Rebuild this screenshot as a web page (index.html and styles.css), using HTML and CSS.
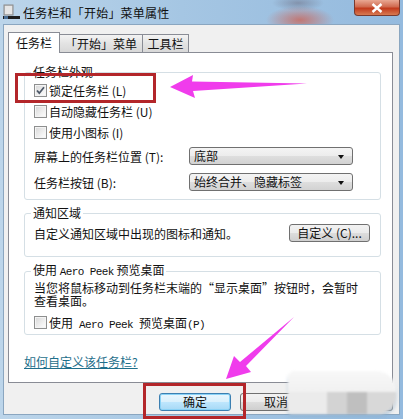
FILE: index.html
```html
<!DOCTYPE html>
<html lang="zh-CN">
<head>
    <meta charset="UTF-8">
    <meta name="viewport" content="width=device-width, initial-scale=1.0">
    <title>任务栏和「开始」菜单属性</title>
    <link rel="stylesheet" href="styles.css">
</head>
<body>
    <div class="window">
        <div class="titlebar">
            <svg class="app-icon" width="17" height="16" viewBox="0 0 17 16">
                <rect x="1" y="1" width="9" height="10" fill="#c9c9c9" stroke="#8a8a8a"/>
                <rect x="2" y="2" width="7" height="8" fill="#e6e6e6"/>
                <rect x="0" y="12" width="17" height="3" fill="#1e1e1e"/>
                <rect x="1" y="12" width="4" height="3" fill="#4a6f96"/>
            </svg>
            <span class="title">任务栏和「开始」菜单属性</span>
            <div class="close">
                <svg width="12" height="10" viewBox="0 0 12 10">
                    <path d="M1.5 1 L10.5 9 M10.5 1 L1.5 9" stroke="#fff" stroke-width="2.4"/>
                </svg>
            </div>
        </div>
        <div class="content">
            <div class="tabs">
                <div class="tab active">任务栏</div>
                <div class="tab">「开始」菜单</div>
                <div class="tab">工具栏</div>
            </div>
            <div class="panel">
                <fieldset class="group first">
                    <legend>任务栏外观</legend>
                    <div class="check-row">
                        <span class="checkbox checked">
                            <svg width="11" height="11" viewBox="0 0 11 11">
                                <path d="M2 5.5 L4.3 8.2 L9 2.2" fill="none" stroke="#4d5868" stroke-width="1.8"/>
                            </svg>
                        </span>
                        <span class="label">锁定任务栏 (L)</span>
                    </div>
                    <div class="check-row">
                        <span class="checkbox"></span>
                        <span class="label">自动隐藏任务栏 (U)</span>
                    </div>
                    <div class="check-row">
                        <span class="checkbox"></span>
                        <span class="label">使用小图标 (I)</span>
                    </div>
                    <div class="select-row">
                        <span class="field-label">屏幕上的任务栏位置 (T):</span>
                        <div class="select">底部<span class="caret"></span></div>
                    </div>
                    <div class="select-row">
                        <span class="field-label">任务栏按钮 (B):</span>
                        <div class="select">始终合并、隐藏标签<span class="caret"></span></div>
                    </div>
                </fieldset>

                <fieldset class="group notify">
                    <legend>通知区域</legend>
                    <div class="notify-row">
                        <span>自定义通知区域中出现的图标和通知。</span>
                        <button class="btn small">自定义 (C)...</button>
                    </div>
                </fieldset>

                <fieldset class="group peek">
                    <legend>使用 <span class="mono">Aero Peek</span> 预览桌面</legend>
                    <p class="desc"><span class="nowrap">当您将鼠标移动到任务栏末端的“显示桌面”按钮时，会暂时</span><br>查看桌面。</p>
                    <div class="check-row">
                        <span class="checkbox"></span>
                        <span class="label">使用<span class="mono"> Aero Peek </span>预览桌面<span class="mono">(P)</span></span>
                    </div>
                </fieldset>

                <a class="help" href="#">如何自定义该任务栏?</a>
            </div>
            <div class="actions">
                <button class="btn primary">确定</button>
                <button class="btn">取消</button>
                <button class="btn">应用(A)</button>
            </div>
        </div>

        <div class="blur"></div>
        <div class="mark mark-lock"></div>
        <div class="mark mark-ok"></div>
        <svg class="arrows" width="403" height="419" viewBox="0 0 403 419">
            <polygon points="170,87 193,75 192,81.5 307,83.5 193,91 195,98" fill="#f03cec"/>
            <polygon points="226,379 234,356 240,362 294,317 246,366 251,372" fill="#f03cec"/>
        </svg>
    </div>
</body>
</html>
```

FILE: styles.css
```css
body {
    margin: 0;
    font-family: "Noto Sans CJK SC", "Liberation Sans", sans-serif;
    font-size: 12px;
    color: #111;
    overflow: hidden;
}
.window {
    position: relative;
    width: 403px;
    height: 419px;
    box-sizing: border-box;
    padding: 0 3px 4px 3px;
    display: flex;
    flex-direction: column;
    background:
        radial-gradient(ellipse 34px 14px at 300px 20px, rgba(205, 95, 80, 0.75), rgba(205, 95, 80, 0)),
        radial-gradient(ellipse 26px 8px at 298px 3px, rgba(110, 110, 130, 0.55), rgba(110, 110, 130, 0)),
        linear-gradient(90deg, #bcd5ea, #a5c6e3 45%, #94bade);
}
.titlebar {
    height: 24px;
    display: flex;
    align-items: center;
    flex-shrink: 0;
}
.app-icon {
    margin: 0 3px 0 0;
}
.title {
    font-size: 12px;
    letter-spacing: 0.2px;
    color: #101010;
}
.close {
    margin-left: auto;
    align-self: flex-start;
    width: 46px;
    height: 16px;
    box-sizing: border-box;
    border: 1px solid #7a3a2e;
    border-top: none;
    border-radius: 0 0 4px 4px;
    background: linear-gradient(#e9a893, #d06a4f 45%, #c23a1c 55%, #d77a52);
    display: flex;
    align-items: center;
    justify-content: center;
}
.content {
    flex: 1;
    background: #f0f0f0;
    border: 1px solid #8aa6c0;
    padding: 7px 6px 0 4px;
    display: flex;
    flex-direction: column;
}
.tabs {
    display: flex;
    align-items: flex-end;
    height: 20px;
    position: relative;
    z-index: 1;
}
.tab {
    height: 18px;
    box-sizing: border-box;
    border: 1px solid #898c95;
    border-bottom: none;
    margin-left: -1px;
    background: linear-gradient(#f3f3f3, #e3e3e3 50%, #d8d8d8);
    display: flex;
    align-items: center;
    justify-content: center;
    line-height: 14px;
    width: 84px;
}
.tab:last-child {
    width: 47px;
}
.tab.active {
    height: 21px;
    width: 52px;
    margin-left: 0;
    margin-bottom: -1px;
    background: #fff;
    position: relative;
    z-index: 2;
}
.panel {
    height: 331px;
    box-sizing: border-box;
    border: 1px solid #898c95;
    background: #fff;
    padding: 0 11px 0 15px;
    display: flex;
    flex-direction: column;
}
.group {
    margin: 6px 0 0 0;
    border: 1px solid #d5dfe5;
    border-radius: 3px;
    padding: 1px 10px 4px 9px;
    min-width: 0;
}
.group.first {
    margin-top: 12px;
}
.group legend {
    padding: 0 2px;
    margin-left: -3px;
    line-height: 14px;
}
.check-row {
    height: 21px;
    display: flex;
    align-items: center;
}
.label {
    white-space: nowrap;
}
.checkbox {
    width: 13px;
    height: 13px;
    box-sizing: border-box;
    border: 1px solid #8e8f8f;
    background: linear-gradient(135deg, #d6d6d6, #f4f4f4 70%, #fdfdfd);
    box-shadow: inset 0 0 0 1px #f4f4f4;
    margin-right: 2px;
    display: flex;
    align-items: center;
    justify-content: center;
    flex-shrink: 0;
}
.checkbox svg {
    display: block;
}
.select-row {
    height: 26px;
    display: flex;
    align-items: center;
}
.field-label {
    width: 155px;
    flex-shrink: 0;
}
.select {
    position: relative;
    width: 164px;
    height: 18px;
    box-sizing: border-box;
    border: 1px solid #707070;
    border-radius: 3px;
    background: linear-gradient(#f4f4f4, #ececec 50%, #dedede 51%, #d2d2d2);
    padding-left: 4px;
    line-height: 16px;
}
.caret {
    position: absolute;
    right: 8px;
    top: 7px;
    border-left: 3.5px solid transparent;
    border-right: 3.5px solid transparent;
    border-top: 4px solid #111;
}
.notify-row {
    height: 24px;
    display: flex;
    align-items: center;
    justify-content: space-between;
}
.group.notify {
    padding-bottom: 11px;
}
.peek {
    padding-top: 2px;
    padding-bottom: 1px;
}
.desc {
    margin: 0 0 5px 0;
    line-height: 13px;
}
.nowrap {
    white-space: nowrap;
}
.mono {
    font-family: "Liberation Mono", monospace;
    font-size: 11px;
    letter-spacing: -0.6px;
    white-space: pre;
}
.help {
    margin-top: 20px;
    line-height: 14px;
    color: #1f6f8b;
    text-decoration: underline;
    align-self: flex-start;
}
.btn {
    font-family: inherit;
    font-size: 12px;
    color: #111;
    width: 72px;
    height: 18px;
    padding: 0;
    border: 1px solid #707070;
    border-radius: 3px;
    background: linear-gradient(#f2f2f2, #ebebeb 50%, #dddddd 51%, #cfcfcf);
    line-height: 14px;
}
.btn.small {
    width: 81px;
}
.btn.primary {
    border-color: #3c7fb1;
    background: linear-gradient(#eaf6fd, #d9f0fc 50%, #bee6fd 51%, #a7d9f5);
    box-shadow: inset 0 0 0 1px #8ad2f6;
}
.actions {
    margin-top: 10px;
    display: flex;
    justify-content: flex-end;
    gap: 9px;
}
.blur {
    position: absolute;
    left: 288px;
    top: 371px;
    width: 108px;
    height: 43px;
    border-radius: 6px 20px 18px 4px;
    background:
        linear-gradient(#f8f8f8, #f1f1f1) top / 100% 21px no-repeat,
        linear-gradient(90deg, #ebebeb 0 39px, #d3d3d3 39px 59px, #bfbfbf 59px 79px, #d8d8d8 79px) bottom / 100% 22px no-repeat;
    box-shadow: 0 3px 3px rgba(140, 175, 205, 0.6);
    filter: blur(1px);
}
.mark {
    position: absolute;
    border: 3px solid #b3262a;
    box-sizing: border-box;
}
.mark-lock {
    left: 15px;
    top: 73px;
    width: 141px;
    height: 30px;
}
.mark-ok {
    left: 143px;
    top: 383px;
    width: 103px;
    height: 36px;
}
.arrows {
    position: absolute;
    left: 0;
    top: 0;
    pointer-events: none;
}
```
